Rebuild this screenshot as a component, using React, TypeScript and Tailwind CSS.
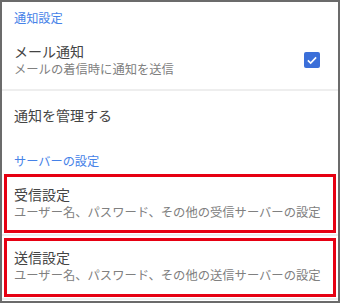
export default function App() {
  const font = { fontFamily: '"Noto Sans CJK JP", "Noto Sans", sans-serif' }

  return (
    <div
      className="w-[340px] h-[303px] overflow-hidden border-2 border-[#6b6b6b] bg-white flex flex-col"
      style={font}
    >
      {/* 通知設定 */}
      <div className="h-[32px] shrink-0 flex items-center pl-3 text-[12.2px] leading-[16px] text-[#4682e8]">
        通知設定
      </div>

      <div className="h-[55px] shrink-0 flex items-start pt-[8px] pl-3 pr-[18px]">
        <div className="flex-1">
          <div className="text-[14px] leading-[18px] text-[#444444]">メール通知</div>
          <div className="text-[12.3px] leading-[18px] text-[#808080]">メールの着信時に通知を送信</div>
        </div>
        <div className="mt-[10px] w-4 h-4 rounded-[2px] bg-[#3b6fd9] flex items-center justify-center">
          <svg viewBox="0 0 16 16" className="w-3 h-3">
            <path d="M2.5 8.5 L6.2 12 L13.5 4.5" fill="none" stroke="white" strokeWidth="2.2" />
          </svg>
        </div>
      </div>
      <div className="h-[2px] shrink-0 bg-[#eeeeee]" />

      <div className="h-[48px] shrink-0 flex items-center pl-3 text-[14px] leading-[20px] text-[#444444]">
        通知を管理する
      </div>

      {/* サーバーの設定 */}
      <div className="h-[35px] shrink-0 pt-[14px] pl-3 text-[12.2px] leading-[16px] text-[#4682e8]">
        サーバーの設定
      </div>

      <div className="h-[59px] shrink-0 mx-[2px] border-[3px] border-[#e60012] pt-[8px] pl-[7px]">
        <div className="text-[14px] leading-[18px] text-[#444444]">受信設定</div>
        <div className="text-[12.3px] leading-[18px] text-[#808080]">
          ユーザー名、パスワード、その他の受信サーバーの設定
        </div>
      </div>
      <div className="h-[2px] shrink-0 mt-[1px] mb-[2px] bg-[#eeeeee]" />

      <div className="h-[59px] shrink-0 mx-[2px] border-[3px] border-[#e60012] pt-[7px] pl-[7px]">
        <div className="text-[14px] leading-[18px] text-[#444444]">送信設定</div>
        <div className="text-[12.3px] leading-[18px] text-[#808080]">
          ユーザー名、パスワード、その他の送信サーバーの設定
        </div>
      </div>
      <div className="h-[2px] shrink-0 mt-[1px] bg-[#eeeeee]" />
    </div>
  )
}
